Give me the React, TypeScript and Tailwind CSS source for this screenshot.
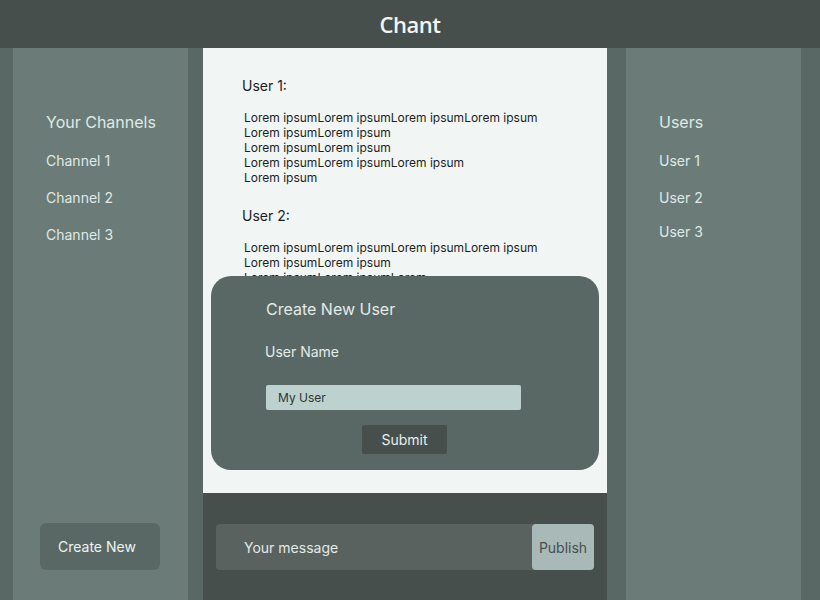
import React from "react";

const lorem1 = [
  "Lorem ipsumLorem ipsumLorem ipsumLorem ipsum",
  "Lorem ipsumLorem ipsum",
  "Lorem ipsumLorem ipsum",
  "Lorem ipsumLorem ipsumLorem ipsum",
  "Lorem ipsum",
];
const lorem2 = [
  "Lorem ipsumLorem ipsumLorem ipsumLorem ipsum",
  "Lorem ipsumLorem ipsum",
  "Lorem ipsumLorem ipsumLorem",
  "Lorem ipsum",
];

function Message({ user, lines }: { user: string; lines: string[] }) {
  return (
    <div className="flex flex-col">
      <div className="pl-[39px] text-[14px] leading-[20px] text-[#1c1f1e]">{user}</div>
      <div className="mt-[14px] pl-[41px] text-[12px] leading-[15px] text-[#1c1f1e]">
        {lines.map((l, i) => (
          <div key={i}>{l}</div>
        ))}
      </div>
    </div>
  );
}

export default function App() {
  return (
    <div
      className="w-[820px] h-[600px] flex flex-col bg-[#5a6865] overflow-hidden"
      style={{ fontFamily: "Inter, 'Noto Sans', sans-serif" }}
    >
      <header className="h-[48px] bg-[#474f4d] flex items-center justify-center">
        <span
          className="text-[22px] font-semibold text-[#f2f5f4] tracking-[-0.5px]"
          style={{ fontFamily: "'Open Sans', Inter, sans-serif" }}
        >
          Chant
        </span>
      </header>
      <div className="flex-1 flex">
        <aside className="ml-[13px] w-[175px] bg-[#6b7c78] flex flex-col pt-[62px] pl-[33px] pb-[30px]">
          <div className="text-[16px] leading-[24px] text-[#dfe9e6]">Your Channels</div>
          <div className="mt-[17px] flex flex-col gap-[17px] text-[14px] leading-[20px] text-[#dfe9e6]">
            <div>Channel 1</div>
            <div>Channel 2</div>
            <div>Channel 3</div>
          </div>
          <div className="mt-auto -ml-[6px] w-[120px] h-[47px] rounded-[6px] bg-[#5a6865] flex items-center pl-[18px] text-[14px] text-[#eef3f1]">
            Create New
          </div>
        </aside>
        <main className="ml-[15px] w-[404px] flex flex-col relative">
          <div className="h-[445px] bg-[#f1f5f4] overflow-hidden pt-[28px] flex flex-col gap-[21px]">
            <Message user="User 1:" lines={lorem1} />
            <Message user="User 2:" lines={lorem2} />
          </div>
          <div className="flex-1 bg-[#474f4d] px-[13px] pt-[31px]">
            <div className="h-[46px] rounded-[4px] bg-[#59625f] flex items-center">
              <span className="pl-[28px] flex-1 text-[14px] text-[#e3e9e7]">Your message</span>
              <div className="w-[62px] h-full rounded-[4px] bg-[#a9b9b7] flex items-center justify-center text-[14px] text-[#47504e]">
                Publish
              </div>
            </div>
          </div>
          <div className="absolute left-[8px] top-[228px] w-[388px] h-[194px] rounded-[20px] bg-[#5a6865] flex flex-col pl-[55px] pt-[22px]">
            <div className="text-[16px] leading-[22px] text-[#e3ebe8]">Create New User</div>
            <div className="mt-[22px] -ml-[1px] text-[14px] leading-[20px] text-[#e3ebe8]">User Name</div>
            <div className="mt-[23px] w-[255px] h-[25px] rounded-[2px] bg-[#bdd1cf] flex items-center pl-[12px] text-[12px] text-[#2f3533]">
              My User
            </div>
            <div className="mt-[15px] ml-[96px] w-[85px] h-[29px] rounded-[2px] bg-[#474f4d] flex items-center justify-center text-[14px] text-[#e8eeec]">
              Submit
            </div>
          </div>
        </main>
        <aside className="ml-[19px] w-[175px] bg-[#6b7c78] flex flex-col pt-[62px] pl-[33px]">
          <div className="text-[16px] leading-[24px] text-[#dfe9e6]">Users</div>
          <div className="mt-[17px] flex flex-col text-[14px] leading-[20px] text-[#dfe9e6]">
            <div>User 1</div>
            <div className="mt-[17px]">User 2</div>
            <div className="mt-[14px]">User 3</div>
          </div>
        </aside>
      </div>
    </div>
  );
}
